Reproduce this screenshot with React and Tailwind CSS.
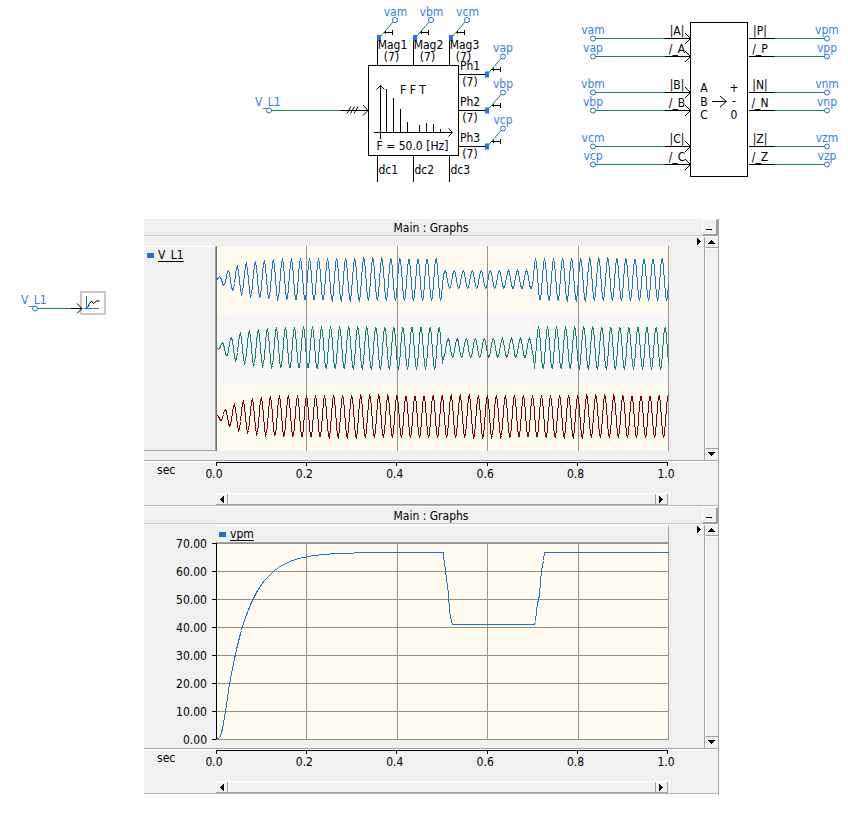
const FONT = "font-['DejaVu_Sans_Condensed','Noto_Sans',sans-serif]";

const TEAL = '#18806b';
const BLUE = '#1b74d3';
const LABEL = '#2f80f5';

function Txt({ x, y, w, children, color = '#000' }) {
  return (
    <text x={x} y={y} fill={color} fontSize="12" stroke="none" textAnchor={w ? 'middle' : 'start'}>
      {children}
    </text>
  );
}

function Node({ x, y }) {
  return <circle cx={x} cy={y} r="2.5" stroke={BLUE} fill="none" />;
}

function Tap({ x, y }) {
  return (
    <g>
      <path d={`M${x + 2} ${y - 1}L${x + 15} ${y - 16}`} stroke={TEAL} />
      <path d={`M${x + 6} ${y - 5.5}h9M${x + 7.5} ${y - 7}v3M${x + 14.5} ${y - 8}v5`} shapeRendering="crispEdges" />
      <rect x={x - 1} y={y - 3} width="4" height="6" fill="#1b74f5" stroke="none" />
      <Node x={x + 17} y={y - 18} />
    </g>
  );
}

const BARS = [[386.5, 89], [393.5, 98], [400.5, 109], [407.5, 122], [419.5, 125], [426.5, 123], [433.5, 124], [440.5, 129]];
const MAGS = [
  { x: 377.5, tag: 'vam', name: 'Mag1', dc: 'dc1' },
  { x: 413.5, tag: 'vbm', name: 'Mag2', dc: 'dc2' },
  { x: 449.5, tag: 'vcm', name: 'Mag3', dc: 'dc3' },
];
const PHASES = [
  { y: 74.5, tag: 'vap', name: 'Ph1' },
  { y: 110.5, tag: 'vbp', name: 'Ph2' },
  { y: 146.5, tag: 'vcp', name: 'Ph3' },
];

function FftBlock() {
  return (
    <svg viewBox="250 0 270 190" className="h-[190px] w-[270px] shrink-0" fill="none" stroke="#000" role="img" aria-label="FFT block">
      <path d="M271 110.5H341" stroke={TEAL} />
      <path d="M341 110.5H368M347 113.5l4-7M350.5 113.5l4-7M354 113.5l4-7M363 105l5 5.5l-5 5" />
      <Node x={269} y={110.5} />
      <Txt x={255} y={106} color={LABEL}>V_L1</Txt>
      {MAGS.map((m) => (
        <g key={m.tag}>
          <path d={`M${m.x} 40V65M${m.x} 156V182`} />
          <Tap x={m.x + 0.5} y={38} />
          <Txt x={m.x + 18} y={16} w color={LABEL}>{m.tag}</Txt>
          <Txt x={m.x + 15} y={49} w>{m.name}</Txt>
          <Txt x={m.x + 14} y={61} w>(7)</Txt>
          <Txt x={m.x + 1} y={174}>{m.dc}</Txt>
        </g>
      ))}
      {PHASES.map((p) => (
        <g key={p.tag}>
          <path d={`M459 ${p.y}H486`} />
          <Tap x={486} y={p.y} />
          <Txt x={503} y={p.y - 22.5} w color={LABEL}>{p.tag}</Txt>
          <Txt x={470} y={p.y - 4.5} w>{p.name}</Txt>
          <Txt x={470} y={p.y + 11.5} w>(7)</Txt>
        </g>
      ))}
      <rect x="368.5" y="65.5" width="90" height="90" />
      <path d="M380.5 139V85M376.5 89.5l4-4l4 4M374 132.5H452M448.5 128.5l4 4l-4 4" />
      {BARS.map(([x, y]) => <path key={x} d={`M${x} ${y}V132`} />)}
      <Txt x={413} y={94} w>F F T</Txt>
      <Txt x={412.5} y={150} w>F = 50.0 [Hz]</Txt>
    </svg>
  );
}

const SEQ = [
  { y: 38.5, l: 'vam', a: '|A|', b: '|P|', r: 'vpm' },
  { y: 56.5, l: 'vap', a: '/_A', b: '/_P', r: 'vpp' },
  { y: 92.5, l: 'vbm', a: '|B|', b: '|N|', r: 'vnm' },
  { y: 110.5, l: 'vbp', a: '/_B', b: '/_N', r: 'vnp' },
  { y: 146.5, l: 'vcm', a: '|C|', b: '|Z|', r: 'vzm' },
  { y: 164.5, l: 'vcp', a: '/_C', b: '/_Z', r: 'vzp' },
];

function SequenceBlock() {
  return (
    <svg viewBox="575 0 273 190" className="h-[190px] w-[273px] shrink-0" fill="none" stroke="#000" role="img" aria-label="Sequence filter block">
      {SEQ.map((s) => (
        <g key={s.y}>
          <path d={`M595 ${s.y}H665M774 ${s.y}H825`} stroke={TEAL} />
          <path d={`M665 ${s.y}H690M749 ${s.y}H774M685 ${s.y - 5.5}l5.5 5.5l-5.5 5.5`} />
          <Node x={593} y={s.y} />
          <Node x={827} y={s.y} />
          <Txt x={593} y={s.y - 4.5} w color={LABEL}>{s.l}</Txt>
          <Txt x={827} y={s.y - 4.5} w color={LABEL}>{s.r}</Txt>
          <Txt x={677} y={s.y - 3.5} w>{s.a}</Txt>
          <Txt x={760} y={s.y - 3.5} w>{s.b}</Txt>
        </g>
      ))}
      <rect x="690.5" y="22.5" width="57" height="154" />
      <path d="M712 101.5H726M720 96l6.5 5.5l-6.5 5.5" />
      <Txt x={704} y={92} w>A</Txt>
      <Txt x={704} y={106} w>B</Txt>
      <Txt x={704} y={119} w>C</Txt>
      <Txt x={734} y={92} w>+</Txt>
      <Txt x={734} y={105} w>-</Txt>
      <Txt x={734} y={119} w>0</Txt>
    </svg>
  );
}

function Probe() {
  return (
    <svg viewBox="0 219 143 110" className="h-[110px] w-[143px] shrink-0" fill="none" stroke="#000" role="img" aria-label="Output channel">
      <path d="M37 308.5H71" stroke={TEAL} />
      <rect x="81" y="292" width="24" height="22" stroke="#d0c4c4" strokeWidth="2" />
      <path d="M86.5 296V309M84 308.5H99" stroke={BLUE} />
      <path d="M71 308.5H82M77 303.5l5 5l-5 5M87.500 307.5l2-4l2-2.5l2 2.5l3-2.5h3" />
      <Node x={35} y={308.5} />
      <Txt x={21} y={304} color={LABEL}>V_L1</Txt>
    </svg>
  );
}

function Arrow({ dir }) {
  const d = { up: 'M0 4L3.5 0L7 4Z', down: 'M0 0H7L3.5 4Z', left: 'M4 0V7L0 3.5Z', right: 'M0 0V7L4 3.5Z' }[dir];
  const flat = dir === 'up' || dir === 'down';
  return (
    <svg width={flat ? 7 : 4} height={flat ? 4 : 7} shapeRendering="crispEdges" aria-hidden="true">
      <path d={d} />
    </svg>
  );
}

function GraphFrame({ title, children }) {
  return (
    <section className="border-r border-l border-l-white border-r-[#a0a0a0] bg-[#f0f0f0]">
      <header className="border-b border-white">
        <div className="flex h-[17px]">
          <h2 className="flex-1 border-b border-[#c6c6c6] pl-4 text-center leading-[18px]">{title}</h2>
          <button aria-label="Minimize" className="flex w-4 items-end justify-center border-t border-r-2 border-b-2 border-l border-t-white border-r-[#a0a0a0] border-b-[#a0a0a0] border-l-white pr-px pb-1">
            <span className="h-px w-1.5 bg-black" />
          </button>
        </div>
      </header>
      <div className="border-b border-white">
        <div className="flex h-[224px] border-b border-[#a0a0a0]">
          {children}
          <div className="flex w-[35px] justify-end pt-px pr-[3px]">
            <button aria-label="Expand" className="h-[7px]"><Arrow dir="right" /></button>
          </div>
          <div className="flex w-3.5 flex-col border-l border-[#a0a0a0]">
            <button aria-label="Scroll up" className="flex h-[11px] items-center justify-center border-b border-l border-b-[#a0a0a0] border-l-white pr-px pb-px"><Arrow dir="up" /></button>
            <div className="flex-1 border-t border-l border-white" />
            <button aria-label="Scroll down" className="flex h-3 items-center justify-center border-t border-l border-t-[#a0a0a0] border-l-white pr-px pb-px"><Arrow dir="down" /></button>
          </div>
        </div>
      </div>
      <TimeAxis />
    </section>
  );
}

function TimeAxis() {
  const ticks = ['0.0', '0.2', '0.4', '0.6', '0.8', '1.0'];
  return (
    <div className="border-b border-white">
      <div className="flex h-11 border-b border-[#b4b4b4]">
        <div className="w-[72px] pl-[13px] leading-4">sec</div>
        <div className="mr-[50px] flex flex-1 flex-col">
          <div className="flex h-1 justify-between border-t border-black">
            {ticks.map((t) => <span key={t} className="w-px bg-black" />)}
          </div>
          <div className="mr-0.5 -ml-0.5 flex flex-1 justify-between leading-4">
            {ticks.map((t) => <span key={t} className="flex w-0 justify-center">{t}</span>)}
          </div>
          <div className="flex h-3 border-t border-b border-t-white border-b-[#a0a0a0]">
            <button aria-label="Scroll left" className="flex w-3 items-center justify-center border-r border-l border-r-[#a0a0a0] border-l-white pr-px"><Arrow dir="left" /></button>
            <div className="flex-1 border-l border-white" />
            <button aria-label="Scroll right" className="flex w-[13px] items-center justify-center border-r border-l border-[#a0a0a0] pr-px"><Arrow dir="right" /></button>
          </div>
        </div>
      </div>
    </div>
  );
}

function Legend({ name }) {
  return (
    <div className="flex gap-1">
      <span className="mt-1.5 h-[5px] w-[7px] bg-[#1b74d3]" />
      <span className="underline underline-offset-2 [text-decoration-skip-ink:none]">{name}</span>
    </div>
  );
}

// 50 Hz wave with an exponential rise; the sag runs from 0.5 s to 0.7 s.
function wave(center, phase, sag) {
  const pts = [];
  for (let x = 0; x <= 452; x += 1) {
    const t = x / 452;
    const low = t > 0.5015 && t < 0.702 ? sag : 1;
    const y = center - 21.5 * (1 - Math.exp(-t / 0.048)) * low * Math.sin(2 * Math.PI * (t * 50 - phase));
    pts.push(`${x + 0.5},${Math.round(y) + 0.5}`);
  }
  return pts.join(' ');
}

function magnitude() {
  const early = [[0, 0], [3, 0.6], [4, 1.4], [6, 3.8], [7, 5.5], [8, 8], [9, 10]];
  const pts = early.map(([x, v]) => `${x + 0.5},${196.5 - v * 2.8}`);
  for (let x = 11; x <= 227; x += 1) {
    const v = 66.8 * (1 - Math.exp(-(x / 452 - 0.0115) / 0.05));
    pts.push(`${x + 0.5},${Math.round(196 - v * 2.8) + 0.5}`);
  }
  const sag = [[227, 13], [229, 27], [230, 36], [232, 50], [233, 68], [235, 78], [236, 81], [318, 81], [319, 78], [320, 68], [321, 60], [323, 52], [324, 38], [325, 27], [327, 17], [328, 9], [452, 9]];
  sag.forEach(([x, y]) => pts.push(`${x + 0.5},${y + 0.5}`));
  return pts.join(' ');
}

const GRID_X = [90.5, 181.5, 271.5, 362.5, 452.5];

function WavePlot() {
  return (
    <svg viewBox="0 0 453 205" preserveAspectRatio="none" className="block h-[205px] w-full" fill="none" shapeRendering="crispEdges" role="img" aria-label="V_L1 phase voltages">
      <defs>
        <pattern id="weave" width="2" height="2" patternUnits="userSpaceOnUse">
          <rect width="2" height="2" fill="#fff" />
          <path d="M0 0h1v1h1v1h-1v-1h-1z" fill="#f0f0f0" />
        </pattern>
      </defs>
      <rect width="453" height="205" fill="#fffbf0" />
      <rect y="68" width="453" height="69" fill="url(#weave)" />
      {GRID_X.map((x) => <path key={x} d={`M${x} 0V205`} stroke="#97938b" />)}
      <path d="M0.5 0V205" stroke="#707070" />
      <polyline points={wave(33, 0.04, 0.43)} stroke={BLUE} />
      <polyline points={wave(101.5, 0.373, 0.45)} stroke={TEAL} />
      <polyline points={wave(170, 0.707, 1)} stroke="#800000" />
    </svg>
  );
}

function MagnitudePlot() {
  return (
    <svg viewBox="0 0 453 197" preserveAspectRatio="none" className="block h-[197px] w-full" fill="none" shapeRendering="crispEdges" role="img" aria-label="vpm magnitude">
      <rect width="453" height="197" fill="#fffbf0" />
      {GRID_X.map((x) => <path key={x} d={`M${x} 0V197`} stroke="#97938b" />)}
      {[0, 28, 56, 84, 112, 140, 168, 196].map((y) => <path key={y} d={`M0 ${y + 0.5}H453`} stroke="#97938b" />)}
      <path d="M0.5 0V197" stroke="#000" />
      <polyline points={magnitude()} stroke={BLUE} />
    </svg>
  );
}

export default function App() {
  return (
    <main className={`min-h-screen bg-white text-xs text-black ${FONT}`}>
      <div className="flex gap-[55px] pb-[29px] pl-[250px]">
        <FftBlock />
        <SequenceBlock />
      </div>
      <div className="flex pr-[129px]">
        <Probe />
        <div className="min-w-0 flex-1">
          <GraphFrame title="Main : Graphs">
            <div className="w-[72px] py-[9px]">
              <div className="h-full border-t border-r border-b border-t-white border-r-[#a0a0a0] border-b-[#a0a0a0] pl-[3px]">
                <Legend name="V_L1" />
              </div>
            </div>
            <div className="min-w-0 flex-1 pt-[9px]"><WavePlot /></div>
          </GraphFrame>
          <GraphFrame title="Main : Graphs">
            <div className="flex w-[72px] flex-col justify-between pt-2.5">
              {['70.00', '60.00', '50.00', '40.00', '30.00', '20.00', '10.00', '0.00'].map((v) => (
                <div key={v} className="flex h-[17px] items-center justify-end gap-[5px]">
                  <span>{v}</span>
                  <span className="h-px w-1 bg-black" />
                </div>
              ))}
            </div>
            <div className="min-w-0 flex-1">
              <div className="h-[18px] border-t border-r border-b border-t-white border-r-[#a0a0a0] border-b-[#a0a0a0] pl-[3px]">
                <Legend name="vpm" />
              </div>
              <MagnitudePlot />
            </div>
          </GraphFrame>
        </div>
      </div>
    </main>
  );
}
